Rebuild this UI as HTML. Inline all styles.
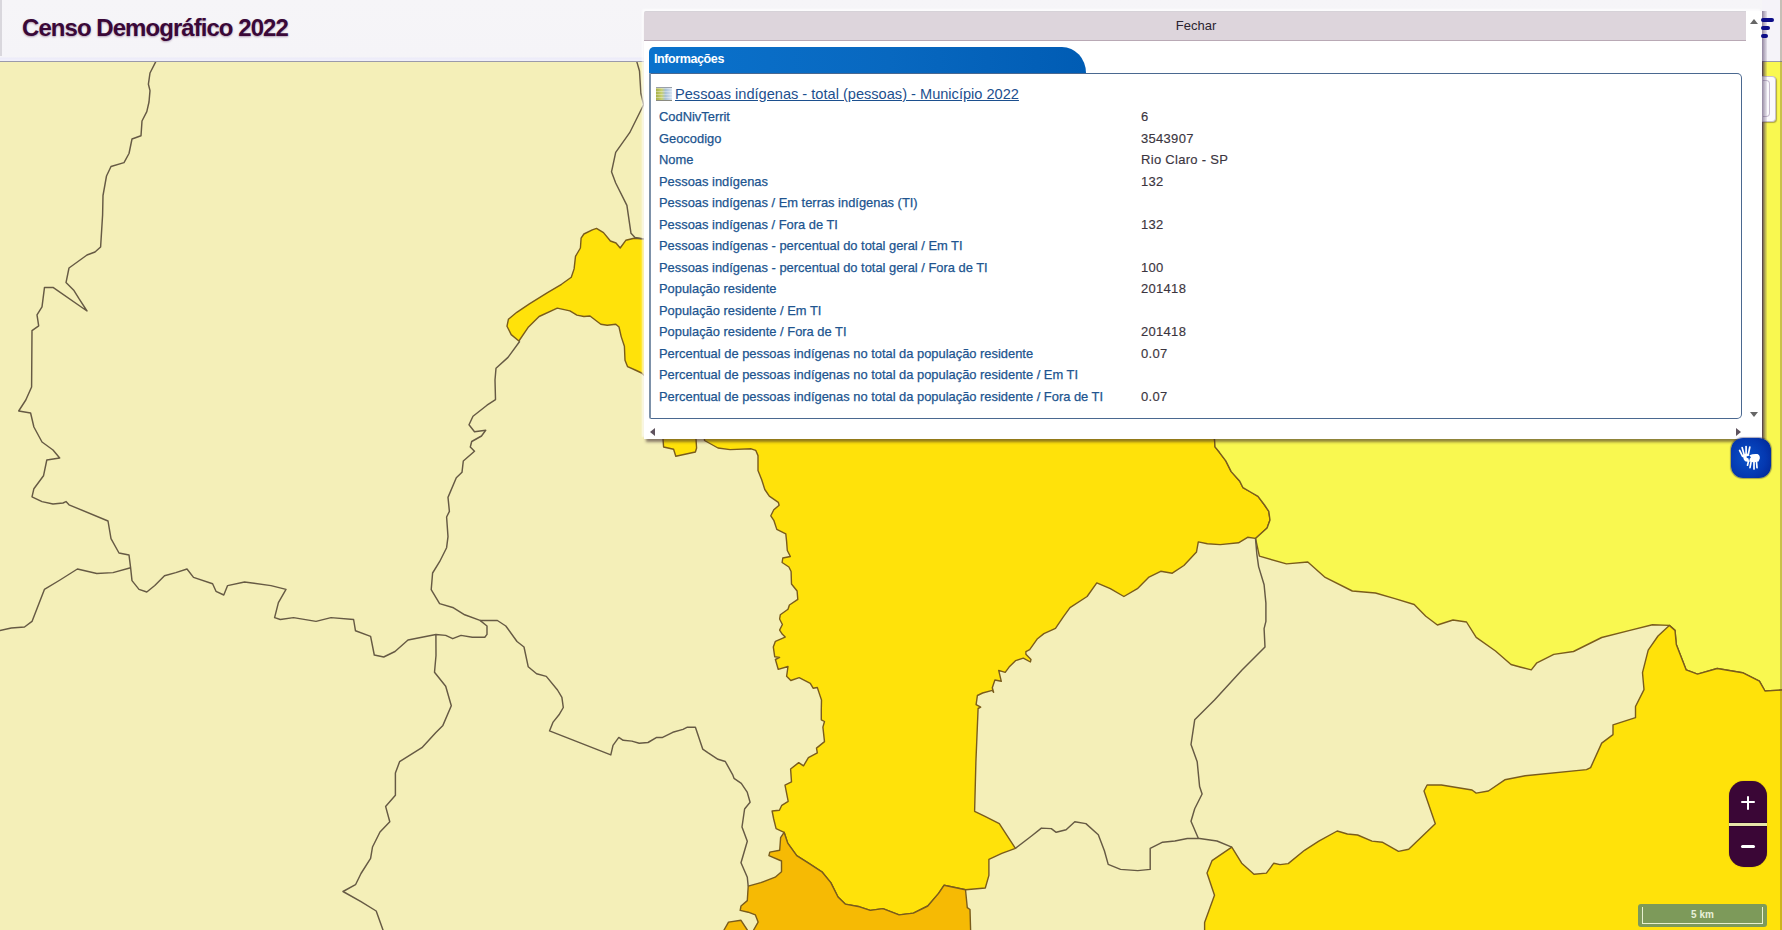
<!DOCTYPE html>
<html><head><meta charset="utf-8">
<style>
html,body{margin:0;padding:0;width:1782px;height:930px;overflow:hidden;background:#f4efb8;font-family:"Liberation Sans",sans-serif;}
#map{position:absolute;left:0;top:0;width:1782px;height:930px;}
#hdr{position:absolute;left:0;top:0;width:1782px;height:62px;background:linear-gradient(180deg,#f6f5f8 0,#f5f4f8 57px,#ecebf9 58px,#f0effa 60px);border-bottom:1px solid #9a9aab;box-sizing:border-box;}
#hdr:before{content:"";position:absolute;left:0;top:0;width:2px;height:56px;background:#d9d7dd;}
#hdr .t{position:absolute;left:22px;top:14px;font-size:24px;font-weight:bold;color:#3a0838;letter-spacing:-0.95px;text-shadow:0 1px 2px rgba(60,0,60,.35);white-space:nowrap;}
#pop{position:absolute;left:644px;top:11px;width:1118px;height:428px;background:#fff;box-shadow:2px 3px 3px rgba(50,30,40,.55),-2px -2px 2px rgba(255,255,255,.7);border-top-left-radius:2px;}
#fech{position:absolute;left:0;top:0;width:1102px;height:30px;background:#ddd5dc;border-bottom:1px solid #b9a9b5;box-sizing:border-box;font-size:13px;color:#2a2430;text-align:center;line-height:28px;padding-left:2px;border-top-left-radius:2px;border-top:1px solid #d6d2d8;}
#tab{position:absolute;left:5px;top:36px;width:437px;height:26px;background:linear-gradient(90deg,#0a72cc 0%,#0868c0 55%,#005cb4 100%);border-top-left-radius:5px;border-top-right-radius:24px 26px;}
#tab span{position:absolute;left:5px;top:5px;font-size:12.5px;font-weight:bold;color:#fff;letter-spacing:-0.4px;}
#box{position:absolute;left:5px;top:62px;width:1093px;height:346px;border:1px solid #4a6890;border-left:2px solid #7d91a9;border-radius:0 5px 5px 2px;box-sizing:border-box;}
#ttl{position:absolute;left:31px;top:75px;font-size:14.6px;color:#1c4f8e;text-decoration:underline;white-space:nowrap;}
#ico{position:absolute;left:12px;top:76px;width:16px;height:14px;background:repeating-linear-gradient(180deg,rgba(255,255,255,.35) 0 1px,rgba(0,0,0,0) 1px 3px),linear-gradient(90deg,#a8b048 0%,#c8d070 35%,#a8c0d8 60%,#d8e4f0 100%);border-top:1px solid #9aa0a8;border-bottom:1px solid #8a8a80;box-sizing:border-box;}
.r{position:absolute;left:15px;font-size:12.9px;color:#20548f;white-space:nowrap;-webkit-text-stroke:0.25px #20548f;}
.v{position:absolute;left:497px;font-size:13px;color:#3b3540;white-space:nowrap;letter-spacing:0.3px;-webkit-text-stroke:0.15px #3b3540;}
.sa{position:absolute;width:0;height:0;border:4px solid transparent;}
</style></head><body>
<svg id="map" width="1782" height="930" viewBox="0 0 1782 930">
<rect x="0" y="0" width="1782" height="930" fill="#f4efb8"/>
<g id="fills" stroke="#7a5c1c" stroke-width="1.4" stroke-linejoin="round">
<polygon points="644.0,239.0 634.2,238.2 625.8,240.3 620.2,248.0 616.0,243.0 610.4,241.0 603.5,232.6 596.5,228.4 592.3,229.8 583.9,234.0 581.1,238.2 580.4,248.0 575.5,256.3 574.1,268.9 571.3,277.3 561.5,284.3 547.5,292.7 529.4,303.9 516.8,312.3 508.4,319.3 507.0,326.2 511.2,334.6 518.9,341.0 528.0,327.6 539.1,316.5 557.3,308.1 569.9,310.9 576.9,315.1 583.9,316.5 590.0,316.0 600.8,324.2 607.2,325.3 615.8,324.2 619.0,327.0 621.2,336.6 624.4,346.2 625.0,360.2 627.6,366.7 635.2,370.0 641.6,373.0 644.0,375.3 700.0,380.0 700.0,239.0" fill="#ffe20a"/>
<polygon points="663.0,436.0 663.0,439.0 663.6,447.0 673.6,449.2 675.8,456.3 695.4,452.0 696.6,448.0 696.0,439.0 696.0,436.0" fill="#ffe20a"/>
<polygon points="704.3,436.0 704.5,440.5 718.0,448.0 730.1,449.6 751.2,448.8 755.7,450.3 758.0,455.6 758.0,470.6 761.7,479.7 764.8,489.5 769.3,496.2 778.3,502.3 779.1,505.3 773.8,509.8 770.8,515.8 773.8,520.3 776.8,529.4 785.8,533.9 786.6,541.4 787.3,550.5 790.4,556.5 782.8,558.0 782.1,562.5 788.9,567.0 791.1,571.5 791.5,584.0 797.1,591.0 797.8,599.4 789.4,605.0 788.0,609.2 780.3,614.8 779.6,619.0 782.4,624.5 779.6,630.1 782.4,634.3 785.2,637.1 775.4,641.3 773.3,646.9 774.7,656.7 779.6,657.4 775.4,659.5 778.2,669.3 788.0,666.5 786.6,676.3 790.8,680.5 799.2,677.7 810.3,683.3 813.1,688.2 817.3,687.5 820.1,695.9 821.5,700.0 821.3,709.4 821.3,719.8 824.5,721.5 822.9,727.1 824.5,741.6 816.5,748.1 817.3,752.9 808.4,757.7 803.5,765.8 798.7,762.6 790.6,769.0 791.5,781.9 785.0,785.2 788.2,801.3 781.8,805.3 779.4,810.2 772.1,811.0 773.7,819.0 776.1,828.7 784.1,832.3 787.7,843.1 796.7,855.7 809.3,863.7 821.9,871.8 830.8,882.6 838.0,897.0 845.2,904.1 859.6,906.8 870.3,910.4 882.9,908.6 899.1,914.9 913.4,913.1 927.8,906.0 938.6,893.4 944.0,885.3 965.5,889.8 985.3,888.0 988.9,875.4 988.9,859.3 1001.8,853.3 1015.4,848.4 999.3,823.6 984.5,816.2 974.6,811.3 975.9,761.8 978.1,708.5 980.7,707.2 976.1,704.6 977.4,695.5 982.6,693.0 992.3,690.4 993.6,692.3 992.3,687.8 994.9,680.0 1001.3,681.3 998.7,670.4 1005.2,672.3 1009.1,667.1 1015.5,660.7 1023.3,658.1 1030.4,662.0 1031.0,659.4 1025.9,654.2 1025.9,651.6 1029.7,649.7 1037.5,638.7 1043.9,633.6 1055.5,628.4 1063.3,616.8 1070.0,607.7 1087.1,596.5 1096.8,582.9 1110.3,588.7 1123.9,596.5 1137.4,588.7 1149.0,577.1 1160.7,571.3 1172.3,573.2 1183.9,565.5 1196.5,552.0 1198.3,541.9 1207.4,543.7 1220.2,544.6 1238.5,542.8 1247.6,537.3 1255.5,538.4 1267.1,528.0 1270.0,520.0 1268.8,511.4 1264.5,505.0 1258.0,496.3 1250.5,492.0 1243.0,487.7 1239.8,481.3 1231.2,471.6 1225.8,460.9 1219.4,452.3 1215.0,446.9 1214.5,439.0 1214.5,436.0" fill="#ffe20a"/>
<polygon points="1214.5,436.0 1214.5,439.0 1215.0,446.9 1219.4,452.3 1225.8,460.9 1231.2,471.6 1239.8,481.3 1243.0,487.7 1250.5,492.0 1258.0,496.3 1264.5,505.0 1268.8,511.4 1270.0,520.0 1267.1,528.0 1255.5,538.4 1259.4,556.1 1286.5,563.9 1307.8,562.0 1325.2,577.4 1352.3,591.0 1375.5,593.0 1394.9,598.7 1414.2,604.5 1425.8,616.2 1437.4,625.0 1453.0,620.0 1466.5,622.0 1476.2,637.4 1495.5,651.0 1511.0,664.5 1520.0,667.0 1531.3,669.9 1536.9,662.8 1553.8,654.4 1573.5,651.5 1601.7,637.5 1629.9,630.4 1652.4,624.8 1669.3,625.4 1675.0,630.4 1676.3,644.5 1686.2,669.9 1697.5,674.1 1717.2,668.5 1742.5,672.7 1759.4,681.1 1765.0,691.0 1790.0,689.6 1790.0,60.0 1762.0,60.0 1762.0,436.0" fill="#f9f850"/>
<polygon points="1669.3,625.4 1675.0,630.4 1676.3,644.5 1686.2,669.9 1697.5,674.1 1717.2,668.5 1742.5,672.7 1759.4,681.1 1765.0,691.0 1790.0,689.6 1790.0,940.0 1204.6,940.0 1204.6,922.5 1214.5,895.3 1207.0,873.0 1212.0,860.7 1231.8,847.1 1241.7,863.2 1254.0,874.3 1266.4,873.1 1273.8,863.2 1280.0,864.6 1288.2,863.6 1304.5,850.3 1318.8,841.1 1337.2,831.0 1347.4,834.0 1357.6,835.0 1372.0,841.1 1382.2,842.2 1398.5,851.4 1408.7,849.3 1435.3,823.8 1424.0,791.0 1427.1,785.0 1441.4,785.0 1472.0,790.0 1476.2,793.1 1488.4,791.0 1504.8,779.8 1525.2,775.8 1586.5,769.6 1590.6,767.6 1601.7,743.1 1613.0,734.6 1613.0,724.8 1635.5,717.7 1635.5,706.5 1644.0,689.6 1642.5,672.7 1648.2,650.1 1658.0,636.0" fill="#ffe20a"/>
<polygon points="784.1,832.3 787.7,843.1 796.7,855.7 809.3,863.7 821.9,871.8 830.8,882.6 838.0,897.0 845.2,904.1 859.6,906.8 870.3,910.4 882.9,908.6 899.1,914.9 913.4,913.1 927.8,906.0 938.6,893.4 944.0,885.3 965.5,889.8 967.3,907.7 970.0,909.5 970.9,940.0 753.6,940.0 753.6,930.0 758.1,922.1 755.4,914.9 748.2,912.2 740.2,910.4 741.0,906.0 747.3,900.6 748.2,886.2 760.8,882.6 775.2,877.2 781.5,871.8 781.5,861.0 768.9,855.7 769.8,852.1 779.7,850.3 780.6,837.7" fill="#f6ba04"/>
<polygon points="722.0,940.0 724.0,930.0 728.5,922.1 741.0,920.3 747.3,930.0 749.0,940.0" fill="#f6ba04"/>
</g>
<g id="lines" fill="none" stroke="#665a44" stroke-width="1.45" stroke-linejoin="round">
<polyline points="157.0,58.0 155.8,61.6 150.0,73.0 148.4,84.2 150.0,90.6 149.0,102.0 146.8,111.6 142.0,121.0 141.0,135.8 132.0,139.0 129.0,153.5 124.0,162.6 111.0,166.5 106.5,176.0 103.0,195.5 102.6,215.0 100.6,247.0 95.0,252.0 87.0,255.0 69.0,268.0 66.0,282.6 74.0,290.6 79.0,298.7 87.0,311.0 53.0,287.4 44.5,287.4 42.0,306.8 37.0,314.8 38.7,325.8 32.0,330.6 31.6,387.0 25.8,400.0 18.7,411.0 30.6,413.0 33.9,427.0 42.0,442.0 53.0,450.0 59.7,458.0 46.8,460.0 43.5,475.8 33.9,488.7 32.0,496.8 42.0,501.6 53.0,504.0 63.0,503.0 66.0,501.6 69.0,504.8 108.0,521.0 111.0,538.7 119.0,553.0 129.0,555.0 130.6,567.7 132.0,580.6 139.0,589.4 146.8,592.0 154.8,585.5 164.5,575.8 175.8,572.6 187.0,569.0 193.5,577.4 212.6,583.8 216.0,591.3 223.8,595.0 227.6,585.6 244.5,582.0 271.0,585.6 286.0,589.4 278.4,602.6 274.6,617.6 280.3,619.5 293.5,617.6 316.0,621.4 331.0,617.6 353.6,619.5 355.5,630.8 370.6,636.4 374.3,655.0 383.7,657.0 395.0,651.5 408.0,640.0 421.9,637.3 435.9,634.5 445.7,635.4 452.7,638.7 461.0,635.4 472.3,637.3 484.8,637.3 487.0,634.4 487.0,626.0 480.0,620.4 464.7,614.8 453.5,607.8 439.6,603.6 431.2,589.7 432.6,573.0 439.6,561.7 446.6,547.7 448.0,536.6 446.6,517.0 449.4,511.4 448.0,497.4 456.3,477.8 462.0,472.3 463.3,461.0 474.5,451.3 470.3,447.0 471.7,441.5 481.5,436.0 485.7,430.3 474.5,431.7 469.0,424.7 473.0,416.3 487.0,405.2 495.5,399.6 495.0,380.0 496.0,368.2 508.0,357.4 519.8,341.3"/>
<polyline points="-2.0,631.0 11.3,628.0 24.5,627.0 32.0,621.4 44.4,589.4 60.0,580.0 77.4,569.0 96.8,573.5 113.0,572.6 130.6,567.7"/>
<polyline points="435.9,634.5 436.0,655.5 434.5,672.3 445.7,686.2 451.3,705.8 442.9,725.4 435.9,732.4 421.9,747.7 399.6,761.7 395.4,772.9 395.4,795.3 385.6,806.4 389.8,821.8 380.0,832.0 372.5,847.0 370.6,858.4 361.0,873.5 355.5,884.7 343.0,891.5 361.0,901.7 376.2,911.0 383.7,932.0"/>
<polyline points="480.0,620.4 497.4,620.5 505.8,626.0 517.0,641.5 524.0,647.0 528.2,666.7 536.6,673.7 546.3,676.4 557.5,690.0 561.9,697.3 563.3,707.5 559.0,714.8 553.1,722.1 549.5,730.9 610.8,754.9 613.0,745.4 618.8,737.4 623.2,740.3 631.9,741.1 639.2,743.3 648.0,742.5 656.7,737.4 662.6,737.4 672.8,732.3 683.0,729.4 687.4,727.2 695.4,727.2 702.7,749.1 707.8,752.7 718.0,759.3 725.3,761.5 732.6,774.6 734.0,778.3 741.3,783.4 747.2,792.1 750.1,802.3 746.4,806.7 744.6,809.0 742.0,827.0 747.3,841.3 741.0,862.8 747.3,877.2 748.2,886.2"/>
<polyline points="636.0,58.0 636.7,61.4 639.5,71.0 640.9,93.5 643.6,104.7 639.5,113.0 629.7,132.7 615.7,152.3 611.5,171.8 615.7,183.0 626.9,205.4 631.0,233.3 635.0,237.5 644.0,239.0"/>
<polyline points="1255.5,538.4 1256.8,553.8 1258.6,566.6 1264.1,584.8 1265.9,603.1 1265.9,621.4 1264.1,628.7 1265.0,647.0 1242.0,670.0 1214.5,700.0 1194.7,719.8 1191.0,744.5 1197.2,761.8 1199.6,786.5 1202.1,794.0 1194.7,808.8 1191.0,821.2 1198.4,838.5"/>
<polyline points="1015.4,848.4 1031.5,836.0 1041.4,828.1 1051.3,828.6 1056.2,832.3 1066.1,829.8 1074.8,821.7 1085.9,823.6 1098.3,834.8 1104.4,850.8 1108.2,864.4 1120.5,869.4 1137.8,870.6 1150.2,869.4 1150.2,848.4 1162.6,842.2 1174.9,841.0 1187.3,838.5 1199.6,838.5 1217.0,841.0 1231.8,847.1"/>
</g>
</svg>
<div id="hdr"><div class="t">Censo Demográfico 2022</div></div>
<div id="pop">
  <div id="fech">Fechar</div>
  <div id="tab"><span>Informações</span></div>
  <div id="box"></div>
  <div id="ico"></div>
  <div class="r" style="top:98px">CodNivTerrit</div>
  <div class="v" style="top:98px">6</div>
  <div class="r" style="top:120px">Geocodigo</div>
  <div class="v" style="top:120px">3543907</div>
  <div class="r" style="top:141px">Nome</div>
  <div class="v" style="top:141px">Rio Claro - SP</div>
  <div class="r" style="top:163px">Pessoas indígenas</div>
  <div class="v" style="top:163px">132</div>
  <div class="r" style="top:184px">Pessoas indígenas / Em terras indígenas (TI)</div>
  <div class="r" style="top:206px">Pessoas indígenas / Fora de TI</div>
  <div class="v" style="top:206px">132</div>
  <div class="r" style="top:227px">Pessoas indígenas - percentual do total geral / Em TI</div>
  <div class="r" style="top:249px">Pessoas indígenas - percentual do total geral / Fora de TI</div>
  <div class="v" style="top:249px">100</div>
  <div class="r" style="top:270px">População residente</div>
  <div class="v" style="top:270px">201418</div>
  <div class="r" style="top:292px">População residente / Em TI</div>
  <div class="r" style="top:313px">População residente / Fora de TI</div>
  <div class="v" style="top:313px">201418</div>
  <div class="r" style="top:335px">Percentual de pessoas indígenas no total da população residente</div>
  <div class="v" style="top:335px">0.07</div>
  <div class="r" style="top:356px">Percentual de pessoas indígenas no total da população residente / Em TI</div>
  <div class="r" style="top:378px">Percentual de pessoas indígenas no total da população residente / Fora de TI</div>
  <div class="v" style="top:378px">0.07</div>

  <div class="sa" style="left:1106px;top:8px;border-bottom:5px solid #666;border-top:none;"></div>
  <div class="sa" style="left:1106px;top:401px;border-top:5px solid #666;border-bottom:none;"></div>
  <div class="sa" style="left:6px;top:417px;border-right:5px solid #5e525e;border-left:none;"></div>
  <div class="sa" style="left:1092px;top:417px;border-left:5px solid #5e525e;border-right:none;"></div>
  <div id="ttl">Pessoas indígenas - total (pessoas) - Município 2022</div>
</div>

<div id="rstrip" style="position:absolute;left:1762px;top:0;width:20px;height:61px;background:#f5f3f9;"></div>
<div style="position:absolute;left:1762px;top:76px;width:14px;height:46px;background:#fbfafd;border:1px solid #c9c2cf;border-left:none;border-radius:0 4px 4px 0;box-sizing:border-box;box-shadow:1px 1px 1px rgba(90,70,40,.45);"><div style="position:absolute;left:1px;top:3px;width:6px;height:35px;border:1px solid #c8bcd0;border-radius:0 4px 4px 0;border-left:none;"></div></div>
<div style="position:absolute;left:1780px;top:0;width:2px;height:930px;background:rgba(110,95,60,.35);"></div>
<div style="position:absolute;left:1762px;top:11px;width:5px;height:428px;background:linear-gradient(90deg,rgba(80,60,100,.6),rgba(80,60,100,.1));"></div>
<div style="position:absolute;left:1761px;top:18px;width:13px;height:4px;background:#0c0c88;border-radius:2px;"></div>
<div style="position:absolute;left:1761px;top:26px;width:9px;height:4px;background:#0c0c88;border-radius:2px;"></div>
<div style="position:absolute;left:1761px;top:34px;width:7px;height:4px;background:#0c0c88;border-radius:2px;"></div>
<div id="vlib" style="position:absolute;left:1731px;top:438px;width:40px;height:40px;border-radius:12px;background:radial-gradient(circle at 40% 50%,#0850c8 0%,#0438b0 60%,#02248e 100%);box-shadow:0 0 1px 1px rgba(0,0,60,.35);">
<svg width="40" height="40" viewBox="0 0 40 40" style="position:absolute;left:0;top:0">
<g stroke="#fff" stroke-linecap="round" fill="none" stroke-width="1.7">
<path d="M11.6 18.3 L8.6 12.4"/><path d="M13.1 16.5 L11.1 9.6"/><path d="M15.1 16 L15.1 8.5"/><path d="M17.3 16.5 L18.8 9.2"/>
<path d="M17.5 23.3 L16.5 27.2"/><path d="M20 24.3 L19 29.7"/><path d="M23 24.3 L23 31"/><path d="M25.5 23.8 L26 29.7"/>
</g>
<g fill="#fff">
<path d="M11.5 17 Q13 15.5 17 15.8 L18.5 17.5 L15.5 18.5 Q15 20 17.5 20.5 L18 23.5 Q14 24.5 12.8 21.5 Z"/>
<path d="M18.5 17.2 Q22 15.5 26.5 16 Q29.2 17 28.8 20.5 L27.5 23.5 Q22 24.8 18.2 23.5 L18.8 20.5 Q20.5 20 19.5 18.8 Z"/>
</g>
</svg></div>
<div id="zoom" style="position:absolute;left:1729px;top:781px;width:38px;height:86px;border-radius:15px;background:#3a0636;overflow:hidden;box-shadow:0 0 1px rgba(0,0,0,.5);">
<div style="position:absolute;left:0;top:41px;width:38px;height:1px;background:#2a0428;"></div>
<div style="position:absolute;left:0;top:42px;width:38px;height:2.5px;background:#e6e4a8;"></div>
<div style="position:absolute;left:0;top:44.5px;width:38px;height:1px;background:#2a0428;"></div>
<div style="position:absolute;left:12px;top:20.3px;width:14px;height:2.2px;background:#fff;border-radius:1px;"></div>
<div style="position:absolute;left:17.9px;top:14.5px;width:2.2px;height:14px;background:#fff;border-radius:1px;"></div>
<div style="position:absolute;left:12px;top:64px;width:14px;height:2.5px;background:#fff;border-radius:1.5px;"></div>
</div>
<div id="scale" style="position:absolute;left:1638px;top:904px;width:129px;height:23px;background:#7d9a5a;border-radius:3px;">
<div style="position:absolute;left:4px;top:3px;width:121px;height:17px;border:1px solid #e8f0d0;border-top:none;box-sizing:border-box;"></div>
<div style="position:absolute;left:0;top:5px;width:129px;text-align:center;font-size:10px;font-weight:bold;color:#e8f0d8;">5 km</div>
</div>
</body></html>
